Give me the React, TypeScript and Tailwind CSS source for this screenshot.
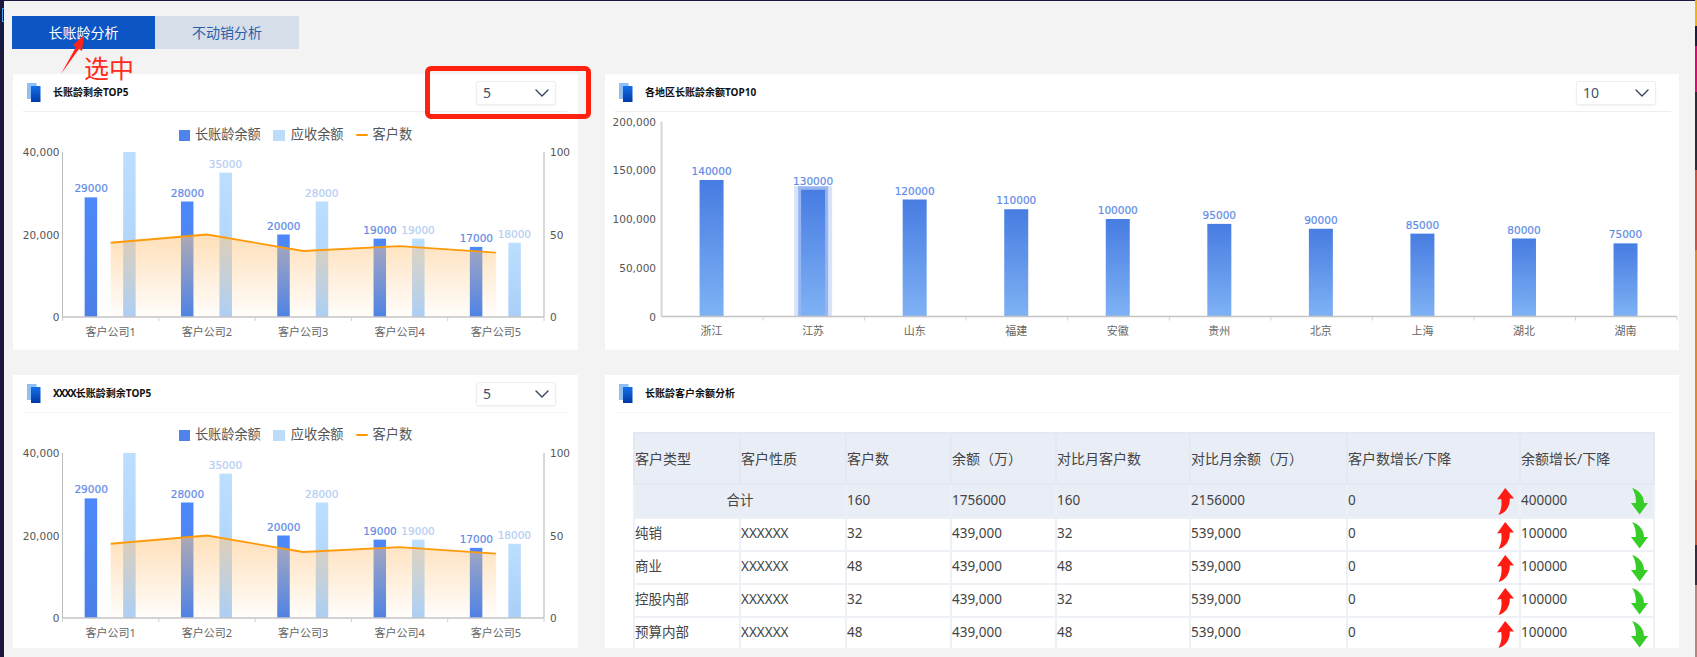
import type { ReactNode } from "react";
import { ChevronDown } from "lucide-react";

const font = '"Noto Sans", "Noto Sans CJK SC", sans-serif';
const chartFont = '"DejaVu Sans", "Noto Sans CJK SC", sans-serif';

const companies = [
  { name: "客户公司1", aging: 29000, total: 40000, count: 45 },
  { name: "客户公司2", aging: 28000, total: 35000, count: 50 },
  { name: "客户公司3", aging: 20000, total: 28000, count: 40 },
  { name: "客户公司4", aging: 19000, total: 19000, count: 43 },
  { name: "客户公司5", aging: 17000, total: 18000, count: 39 },
];

const regions = [
  { name: "浙江", value: 140000 },
  { name: "江苏", value: 130000 },
  { name: "山东", value: 120000 },
  { name: "福建", value: 110000 },
  { name: "安徽", value: 100000 },
  { name: "贵州", value: 95000 },
  { name: "北京", value: 90000 },
  { name: "上海", value: 85000 },
  { name: "湖北", value: 80000 },
  { name: "湖南", value: 75000 },
];

const rows = [
  { type: "纯销", count: "32" },
  { type: "商业", count: "48" },
  { type: "控股内部", count: "32" },
  { type: "预算内部", count: "48" },
];

function CardIcon() {
  return (
    <svg width="14" height="20" viewBox="0 0 14 20" className="shrink-0">
      <defs>
        <linearGradient id="cardIconFront" x1="0" y1="0" x2="0" y2="1">
          <stop offset="0" stopColor="#1670e8" />
          <stop offset="1" stopColor="#0039a8" />
        </linearGradient>
      </defs>
      <rect x="0" y="0" width="9.5" height="16" fill="#8fc0f5" />
      <rect x="4" y="3" width="9.5" height="16" fill="url(#cardIconFront)" />
    </svg>
  );
}

function Select({ value }: { value: string }) {
  return (
    <div className="flex h-[24px] w-[80px] items-center justify-between rounded-[2px] border border-[#eeeeee] pl-[6px] pr-[1px] text-[14px] text-[#44506a] shadow-[0_1px_2px_rgba(0,0,0,0.05)]">
      <span>{value}</span>
      <ChevronDown size={24} strokeWidth={1.4} className="text-[#34445e]" />
    </div>
  );
}

function CardHeader({ title, select, lineClass, selectClass }: { title: ReactNode; select?: string; lineClass: string; selectClass?: string }) {
  return (
    <div className={`ml-[10px] flex h-[38px] shrink-0 items-center justify-between border-b pl-[4px] ${lineClass}`}>
      <div className="flex items-center gap-[12px]">
        <CardIcon />
        <span className="text-[10px] font-bold text-[#111111]">{title}</span>
      </div>
      {select && <div className={selectClass}><Select value={select} /></div>}
    </div>
  );
}

function Legend({ className }: { className: string }) {
  return (
    <div className={`flex h-[22px] shrink-0 items-center justify-center text-[13.2px] text-[#555555] ${className}`}>
      <span className="h-[11px] w-[11px] bg-[#4f82ea]" />
      <span className="ml-[5px]">长账龄余额</span>
      <span className="ml-[12px] h-[11px] w-[12px] bg-[#bcdcfb]" />
      <span className="ml-[6px]">应收余额</span>
      <span className="ml-[12px] h-[2px] w-[12px] rounded-full bg-[#ff9800]" />
      <span className="ml-[5px]">客户数</span>
    </div>
  );
}

// plot runs from y=6 to y=171 inside the svg, x=50 to x=531
function ComboChart({ id }: { id: string }) {
  const left = 49.5;
  const right = 531;
  const top = 6;
  const bottom = 171;
  const step = (right - left) / 5;
  const yOf = (v: number) => bottom - (v / 40000) * (bottom - top);
  const yCount = (v: number) => bottom - (v / 100) * (bottom - top);
  const pts = companies.map((c, i) => [left + step * (i + 0.5), yCount(c.count)]);
  const line = pts.map((p) => p.join(",")).join(" ");
  const area = `${pts[0][0]},${bottom} ${line} ${pts[4][0]},${bottom}`;
  return (
    <svg width="565" height="204" viewBox="0 0 565 204" className="block shrink-0" style={{ fontFamily: chartFont }}>
      <defs>
        <linearGradient id={`${id}-dark`} x1="0" y1="0" x2="0" y2="1">
          <stop offset="0" stopColor="#4d88fb" />
          <stop offset="1" stopColor="#4a80e6" />
        </linearGradient>
        <linearGradient id={`${id}-light`} x1="0" y1="0" x2="0" y2="1">
          <stop offset="0" stopColor="#bcdfff" />
          <stop offset="1" stopColor="#a9cff8" />
        </linearGradient>
        <linearGradient id={`${id}-area`} x1="0" y1="0" x2="0" y2="1">
          <stop offset="0" stopColor="#ffc680" stopOpacity="0.55" />
          <stop offset="1" stopColor="#ffc680" stopOpacity="0.03" />
        </linearGradient>
      </defs>

      {companies.map((c, i) => {
        const cx = left + step * (i + 0.5);
        return (
          <g key={c.name}>
            <rect x={cx - 26} y={yOf(c.aging)} width="12.5" height={bottom - yOf(c.aging)} fill={`url(#${id}-dark)`} />
            <rect x={cx + 12.5} y={yOf(c.total)} width="12.5" height={bottom - yOf(c.total)} fill={`url(#${id}-light)`} />
            <text x={cx - 19.5} y={yOf(c.aging) - 5} textAnchor="middle" fontSize="10.5" fill="#5f8ce8" stroke="#5f8ce8" strokeWidth="0.2">{c.aging}</text>
            {i > 0 && (
              <text x={cx + 18.5} y={yOf(c.total) - 5} textAnchor="middle" fontSize="10.5" fill="#b4cef4" stroke="#b4cef4" strokeWidth="0.2">{c.total}</text>
            )}
            <text x={cx} y={190} textAnchor="middle" fontSize="11" fill="#666666" style={{ fontFamily: font }}>{c.name}</text>
          </g>
        );
      })}

      <polygon points={area} fill={`url(#${id}-area)`} />
      <polyline points={line} fill="none" stroke="#ff9a0a" strokeWidth="1.8" />

      <line x1={left} y1={top} x2={left} y2={bottom} stroke="#bdbdbd" />
      <line x1={right} y1={top} x2={right} y2={bottom} stroke="#cccccc" strokeWidth="1.5" />
      <line x1={left} y1={bottom} x2={right} y2={bottom} stroke="#c4c4c4" strokeWidth="1.5" />
      {[0, 1, 2, 3, 4, 5].map((i) => (
        <line key={i} x1={left + step * i} y1={bottom} x2={left + step * i} y2={bottom + 4} stroke="#d0d0d0" />
      ))}

      {[
        ["40,000", top],
        ["20,000", (top + bottom) / 2],
        ["0", bottom],
      ].map(([label, y]) => (
        <text key={label} x={46.5} y={Number(y) + 4} textAnchor="end" fontSize="10.5" fill="#555555">{label}</text>
      ))}
      {[
        ["100", top],
        ["50", (top + bottom) / 2],
        ["0", bottom],
      ].map(([label, y]) => (
        <text key={label} x={537} y={Number(y) + 4} fontSize="10.5" fill="#555555">{label}</text>
      ))}
    </svg>
  );
}

// plot runs from y=10 to y=205 inside the svg
function RegionChart() {
  const left = 56.5;
  const right = 1072;
  const top = 9.5;
  const bottom = 204.5;
  const step = (right - left) / 10;
  const yOf = (v: number) => bottom - (v / 200000) * (bottom - top);
  const centerOf = (i: number) => left + step * (i + 0.5) - 0.7;
  return (
    <svg width="1074" height="238" viewBox="0 0 1074 238" className="block shrink-0" style={{ fontFamily: chartFont }}>
      <defs>
        <linearGradient id="regionBar" x1="0" y1="0" x2="0" y2="1">
          <stop offset="0" stopColor="#477ce2" />
          <stop offset="1" stopColor="#7fb2f4" />
        </linearGradient>
      </defs>

      {/* hover band on 江苏 */}
      <rect x={centerOf(1) - 19} y={yOf(130000) - 3.5} width="38" height={bottom - yOf(130000) + 3.5} fill="#4a7fe6" fillOpacity="0.22" />
      <rect x={centerOf(1) - 15} y={yOf(130000) - 3.5} width="30" height={bottom - yOf(130000) + 3.5} fill="#4a7fe6" fillOpacity="0.45" />

      {regions.map((r, i) => {
        const cx = centerOf(i);
        return (
          <g key={r.name}>
            <rect x={cx - 12} y={yOf(r.value)} width="24" height={bottom - yOf(r.value)} fill="url(#regionBar)" />
            <text x={cx} y={yOf(r.value) - 5} textAnchor="middle" fontSize="10.5" fill="#5f8ce8" stroke="#5f8ce8" strokeWidth="0.2">{r.value}</text>
            <text x={cx} y={223} textAnchor="middle" fontSize="11" fill="#666666" style={{ fontFamily: font }}>{r.name}</text>
          </g>
        );
      })}

      <line x1={left} y1={top} x2={left} y2={bottom} stroke="#d6d6d6" strokeWidth="2" />
      <line x1={left} y1={bottom} x2={right} y2={bottom} stroke="#c4c4c4" strokeWidth="1.5" />
      {regions.map((_, i) => (
        <line key={i} x1={left + step * (i + 1)} y1={bottom} x2={left + step * (i + 1)} y2={bottom + 4} stroke="#d0d0d0" />
      ))}

      {[
        ["200,000", 200000],
        ["150,000", 150000],
        ["100,000", 100000],
        ["50,000", 50000],
        ["0", 0],
      ].map(([label, v]) => (
        <text key={label} x={51} y={yOf(Number(v)) + 4} textAnchor="end" fontSize="10.5" fill="#555555">{label}</text>
      ))}
    </svg>
  );
}

function UpArrow() {
  return (
    <svg width="17" height="27" viewBox="0 0 17 27" className="absolute right-[5px] top-[3px]">
      <path d="M8.2 0 L17 10.5 L12.8 10.5 C13 18 9.5 24.5 1.5 27 C4.6 21 5 16 4.2 11 L0 11.5 Z" fill="#ff1a12" />
    </svg>
  );
}

function DownArrow() {
  return (
    <svg width="17" height="27" viewBox="0 0 17 27" className="absolute right-[5px] top-[3px]">
      <path d="M1.2 0 C8 2 13 8 13 15 L17 15 L8.6 26.5 L0 15 L4.8 15 C5.2 9 4 5 1.2 0 Z" fill="#38cc28" />
    </svg>
  );
}

function AnalysisTable() {
  const cell = "relative border-2 border-[#edf0f7] pb-[1px] align-middle font-normal";
  const head = "border-2 border-[#e3e8f2] bg-[#e9eef6] align-middle font-normal text-[14px]";
  return (
    <table className="ml-[28px] mt-[19px] w-[1020px] table-fixed border-collapse text-left text-[13.5px] text-[#444444]">
      <colgroup>
        <col className="w-[106px]" />
        <col className="w-[106px]" />
        <col className="w-[105px]" />
        <col className="w-[105px]" />
        <col className="w-[134px]" />
        <col className="w-[157px]" />
        <col className="w-[173px]" />
        <col className="w-[134px]" />
      </colgroup>
      <thead>
        <tr className="h-[51px]">
          {["客户类型", "客户性质", "客户数", "余额（万）", "对比月客户数", "对比月余额（万）", "客户数增长/下降", "余额增长/下降"].map((h) => (
            <th key={h} className={head}>{h}</th>
          ))}
        </tr>
      </thead>
      <tbody>
        <tr className="h-[33.5px] bg-[#e9eef6]">
          <td colSpan={2} className={`${cell} border-[#e3e8f2] text-center`}>合计</td>
          <td className={`${cell} border-[#e3e8f2]`}>160</td>
          <td className={`${cell} border-[#e3e8f2]`}>1756000</td>
          <td className={`${cell} border-[#e3e8f2]`}>160</td>
          <td className={`${cell} border-[#e3e8f2]`}>2156000</td>
          <td className={`${cell} border-[#e3e8f2]`}>0<UpArrow /></td>
          <td className={`${cell} border-[#e3e8f2]`}>400000<DownArrow /></td>
        </tr>
        {rows.map((r) => (
          <tr key={r.type} className="h-[33px]">
            <td className={cell}>{r.type}</td>
            <td className={cell}>XXXXXX</td>
            <td className={cell}>{r.count}</td>
            <td className={cell}>439,000</td>
            <td className={cell}>{r.count}</td>
            <td className={cell}>539,000</td>
            <td className={cell}>0<UpArrow /></td>
            <td className={cell}>100000<DownArrow /></td>
          </tr>
        ))}
      </tbody>
    </table>
  );
}

export default function App() {
  return (
    <div className="relative flex h-[657px] w-[1697px] overflow-hidden bg-[#f3f3f3]" style={{ fontFamily: font }}>
      <div className="h-full w-[4px] shrink-0 bg-[#1b1840]" />

      <div className="min-w-0 flex-1 border-t border-[#1b1840] pl-[9px]">
        {/* Tabs */}
        <div className="ml-[-1px] mt-[15px] flex h-[33px] text-[14px]">
          <div className="flex w-[143px] items-center justify-center bg-[#0b55c5] text-white">长账龄分析</div>
          <div className="flex w-[144px] items-center justify-center bg-[#d6deea] text-[#2c5ea8]">不动销分析</div>
        </div>

        <div className="mt-[25px] grid grid-cols-[565px_1074px] grid-rows-[276px_273px] gap-x-[27px] gap-y-[25px]">
          <div className="flex flex-col overflow-hidden bg-white">
            <CardHeader title="长账龄剩余TOP5" select="5" lineClass="mr-[10px] border-[#eeeeee]" selectClass="mr-[12px]" />
            <Legend className="mt-[12px]" />
            <ComboChart id="top" />
          </div>
          <div className="flex flex-col overflow-hidden bg-white">
            <CardHeader title="各地区长账龄余额TOP10" select="10" lineClass="mr-[8px] border-[#eeeeee]" selectClass="mr-[15px]" />
            <RegionChart />
          </div>
          <div className="flex flex-col overflow-hidden bg-white">
            <CardHeader
              title={<><span className="tracking-[-1px]">XXXX</span>长账龄剩余TOP5</>}
              select="5"
              lineClass="mr-[10px] border-[#f5f5f5]"
              selectClass="mr-[12px]"
            />
            <Legend className="mb-[1px] mt-[11px]" />
            <ComboChart id="bottom" />
          </div>
          <div className="flex flex-col overflow-hidden bg-white">
            <CardHeader title="长账龄客户余额分析" lineClass="mr-[8px] border-[#f7f7f7]" />
            <AnalysisTable />
          </div>
        </div>
      </div>

      {/* sliver of the desktop wallpaper at the right edge */}
      <div className="flex h-full w-[2px] shrink-0 flex-col">
        <div className="h-[26px] bg-[#f5b400]" />
        <div className="h-[20px] bg-[#1e1a3c]" />
        <div className="h-[46px] bg-[#e6007e]" />
        <div className="h-[78px] bg-[#2e2838]" />
        <div className="h-[80px] bg-[#d5503a]" />
        <div className="h-[230px] bg-[#e8851e]" />
        <div className="h-[65px] bg-[#d9562e]" />
        <div className="h-[40px] bg-[#3a2a3a]" />
        <div className="flex-1 bg-[#b8857a]" />
      </div>

      {/* blue bracket on the window edge */}
      <div className="absolute left-[2px] top-[8px] h-[14px] w-[2px] border-y border-l border-[#3ea0e8]" />

      {/* review annotation drawn over the page */}
      <svg width="40" height="44" viewBox="0 0 40 44" className="absolute left-[55px] top-[32px]">
        <path d="M6 42 L21 15 L18 13 L29 3 L27 19 L24 17 Z" fill="#ff2418" />
      </svg>
      <div className="absolute left-[84px] top-[52px] text-[25px] leading-[32px] text-[#ff2a1a]">选中</div>
      <div className="absolute left-[425px] top-[66px] h-[53px] w-[166px] rounded-[6px] border-[5px] border-[#ff2010]" />
    </div>
  );
}
